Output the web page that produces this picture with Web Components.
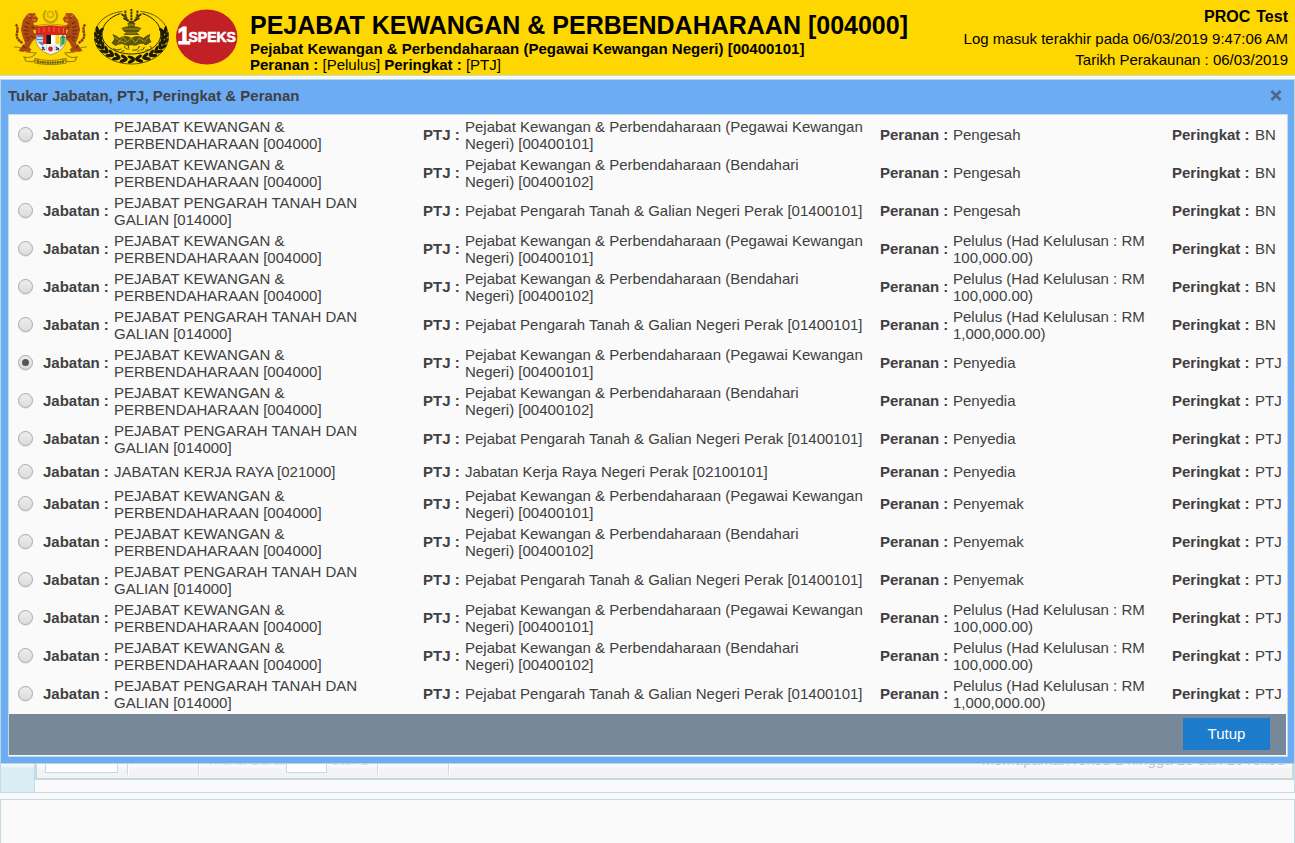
<!DOCTYPE html>
<html lang="ms">
<head>
<meta charset="utf-8">
<title>1SPEKS</title>
<style>
html,body{margin:0;height:843px;overflow:hidden;background:#fafafa;font:15px/17px "Liberation Sans",Arial,sans-serif;color:#404040}
</style>
</head>
<body>
<speks-app></speks-app>
<script>
function define(name, html, setup) {
  const t = document.createElement('template');
  t.innerHTML = html;
  customElements.define(name, class extends HTMLElement {
    constructor() {
      super();
      this.attachShadow({mode: 'open'}).appendChild(t.content.cloneNode(true));
    }
    connectedCallback() { if (setup) setup(this, this.shadowRoot); }
  });
}

const tiger = `
    <path d="M13 6q3-2 5-1l2-.5 1 3 2 2-1 3-4 1 1 3 5 1v3l-6 0 1 4 5 1 1 3-5 1-3 3-3 6 2 2-1 2-5-1 1-8-2-5-2-8 2-9z" fill="#ad4a14" stroke="#ad4a14" stroke-width="1.200"/>
    <path d="M8 34Q1 30 2.500 24T1 15" fill="none" stroke="#8c380d" stroke-width="2.400" stroke-dasharray="2.600 .5"/>
    <path d="M9 35l-5 7 5 1 5-6z" fill="#a94512"/>
    <path d="M11 13l4 2M10 17l4 2M9 21l5 1M10 25l4 0M11 29l4-1M12 32l3-2M15 8l2 2M17 18l3 1M16 27l4 2M8 37l3 2" stroke="#5a1f08" stroke-width=".9"/>
    <path d="M14 6l1 2M19 7h2M18 11h3" stroke="#e5a13a" stroke-width="1"/>`;

/* Federal coat of arms: crescent, two tigers, shield and motto ribbon */
define('crest-malaysia', `
<style>:host{display:block;width:75px;height:56px}svg{display:block}</style>
<svg width="75" height="56" viewBox="0 0 75 56">
  <g fill="none" stroke="#c4a000" stroke-width="2.200">
    <path d="M33 1.500a6.800 6.800 0 1 0 9 0"/><circle cx="37.500" cy="5.500" r="3" stroke-width="1.800" stroke-dasharray="1.200 .5"/>
  </g>
  <path d="M23 17q14-4 30 0" fill="none" stroke="#c79a00" stroke-width="1.200"/>
  <g fill="none" stroke="#9c830c" stroke-width="1.200">
    <path d="M1 38q9 0 12 5l10 1q-4 6-12 4l2 4q8 2 13-2M74 38q-9 0-12 5l-10 1q4 6 12 4l-2 4q-8 2-13-2"/>
    <path d="M22 49.500q15 4 31 0v4.500q-15 3-31 0z"/>
  </g>
  <path d="M24 52.300q13 2.600 27 0" fill="none" stroke="#6b590c" stroke-width="2.200" stroke-dasharray="2 .5"/>
  <g transform="translate(1.500 0)">${tiger}</g>
  <g transform="matrix(-1 0 0 1 73.500 0)">${tiger}</g>
  <path d="M23 18q14-3 30 0v14q-1 9-15 14Q24 41 23 32z" fill="#f3f3ee" stroke="#a0642c" stroke-width=".6"/>
  <path d="M23 18q14-3 30 0v8H23z" fill="#d9261c"/>
  <path d="M26 19v5M31 18.500v5M36 18v5M41 18v5M46 18.500v5M50.500 19v5" stroke="#ef6a22" stroke-width="1"/>
  <path d="M23.300 26h7v11q-6-3-7-7z" fill="#5a88bd"/><path d="M24 29h6M24 32h6" stroke="#e8eef2" stroke-width="1.400"/>
  <path d="M30 26h4.500v9H30z" fill="#e12c24"/><path d="M33.500 26h4.500v9h-4.500z" fill="#171717"/>
  <path d="M38 26h4.500v9H38z" fill="#fff"/><path d="M42.500 26h4v9h-4z" fill="#f8d313"/>
  <path d="M47 28h5.500v5q-1 3-5.500 5z" fill="#79b86b"/><path d="M50 26v9M48 28h4" stroke="#1f8a45" stroke-width="1.300"/>
  <circle cx="37.500" cy="40" r="2.400" fill="#cf2530"/><path d="M29 38l3 3M31 38l-2 3M43 38l3 3M46 39l-3 2" stroke="#2a3f79" stroke-width="1.300"/>
  <path d="M33.500 36v6M42 36v6" stroke="#8c9bbb" stroke-width=".5"/>
</svg>`);

/* Perak state crest: rice wreath around a crown */
define('crest-perak', `
<style>:host{display:block;width:76px;height:56px}svg{display:block}</style>
<svg width="76" height="56" viewBox="0.600 0 76 56">
  <g fill="none" stroke="#242000">
    <path d="M29 2.500C12 4 1 15 1 28c0 15 17 27 37 27s37-12 37-27C75 15 64 4 47 2.500" stroke-width=".7"/>
    <path d="M27 4.500C16 8 8.500 16 8.500 25c0 11 13 20 29.500 20s29.500-9 29.500-20C67.500 16 60 8 49 4.500" stroke-width="1"/>
  </g>
  <g id="leaves" fill="#1f1c04"></g>
  <g stroke="#3c3707" stroke-width="1.900" fill="none">
    <path d="M38 0v15M32 1.500q-1 8 6 13M44 1.500q1 8-6 13" stroke-dasharray="2.400 .6"/>
    <path d="M28 5l4 3M30 9l5 3M48 5l-4 3M46 9l-5 3"/>
  </g>
  <path d="M34 14h8l-1 4h-6zM28 19q10-4 20 0l-3 4H31zM33 23h10l3 3H30z" fill="#5b530a"/>
  <path d="M30 20h16M33 24h10M35 16h6" stroke="#d1b500" stroke-width=".7"/>
  <path d="M19 25q4 1 7 4 6-4 12 0 6-4 12 0 3-3 7-4l-1 4 2 4-5 3q-4-2-7-1-4 3-8 1-5 2-9-1-4 0-7 2l-4-3 3-4z" fill="#5c5409"/>
  <path d="M21 28l5 4 4-4 4 5 4-4 4 5 4-5 5 4 4-5M24 34l3-2 6 2" fill="none" stroke="#c5ab00" stroke-width=".8"/>
  <path d="M20 39.500q3 3 8 .5m3-3q1 4 5 3m-1-4v3m4 2q6 1 7-4m1 4q3 1 4-3m1 3h5q2-2 0-4M28 42.500l3-1m13 1l2-1m5-6h2" fill="none" stroke="#4a4306" stroke-width="1"/>
</svg>`, (host, root) => {
  const g = root.getElementById('leaves');
  let d = '';
  for (let i = 0; i < 34; i++) {
    const t = -14 + Math.floor(i / 2) * 13;
    const a = t * Math.PI / 180;
    const dir = t < 90 ? -1 : 1, side = i % 2 ? 1 : -1;
    const x = 38 + (33.3 + side * 1.700) * Math.cos(a), y = 27.200 + (23.3 + side * 1.700) * Math.sin(a);
    const rot = Math.atan2(23.8 * Math.cos(a), -33.3 * Math.sin(a)) * 180 / Math.PI - dir * side * 26;
    d += `<ellipse cx="${x.toFixed(1)}" cy="${y.toFixed(1)}" rx="4" ry="1.600" transform="rotate(${rot.toFixed(0)} ${x.toFixed(1)} ${y.toFixed(1)})"/>`;
  }
  g.innerHTML = d;
});

define('speks-logo', `
<style>:host{display:block;width:62px;height:56px}svg{display:block}text{font-family:"Liberation Sans",Arial,sans-serif;font-weight:700;fill:#fff;stroke:#fff}</style>
<svg width="62" height="56" viewBox="0 0 62 56">
  <ellipse cx="30.700" cy="28" rx="30.700" ry="27.500" fill="#c12026"/>
  <text y="34.500"><tspan x="1.500" font-size="23" stroke-width="1">1</tspan><tspan x="12.500" y="33" font-size="14" stroke-width=".6">SPEKS</tspan></text>
</svg>`);

define('app-header', `
<style>
:host{display:flex;height:75px;background:#ffd700;color:#000;border-bottom:1px solid #c5dbe2}
.logos{display:flex;gap:6px;padding:9px 0 0 13px;width:237px;box-sizing:border-box}
.org{flex:1;padding-top:10px;padding-left:13px;white-space:nowrap}
h1{font-size:25px;line-height:31px;margin:0;font-weight:bold}
.org div{line-height:16px;font-size:15px}
.user{padding:6px 7px 0 0;text-align:right;line-height:21.700px;font-size:15px;white-space:nowrap}
.user b{font-size:16px;word-spacing:1.500px}
</style>
<div class="logos"><crest-malaysia></crest-malaysia><crest-perak></crest-perak><speks-logo></speks-logo></div>
<div class="org"><h1>PEJABAT KEWANGAN &amp; PERBENDAHARAAN [004000]</h1>
<div><b>Pejabat Kewangan &amp; Perbendaharaan (Pegawai Kewangan Negeri) [00400101]</b></div>
<div><b>Peranan :</b> [Pelulus] <b>Peringkat :</b> [PTJ]</div></div>
<div class="user"><b>PROC Test</b><br>Log masuk terakhir pada 06/03/2019 9:47:06 AM<br>Tarikh Perakaunan : 06/03/2019</div>`);

define('radio-dot', `
<style>
:host{display:flex;align-items:center;justify-content:center;box-sizing:border-box;width:15px;height:15px;border:1px solid #a9a9a9;border-radius:50%;background:linear-gradient(#ededed,#dcdcdc);box-shadow:0 1px 0 #e8e8e8}
i{display:none;width:7px;height:7px;border-radius:50%;background:#555}
:host([checked]) i{display:block}
</style><i></i>`);

define('role-row', `
<style>
:host{display:grid;grid-template-columns:25px 71px 309px 42px 415px 73px 219px 83px 1fr;align-items:center;height:27px;padding-left:9px;box-sizing:border-box}
:host([tall]){height:38px;padding-bottom:1px}
span,b{white-space:pre}
span.two{margin-bottom:-1px}
</style>
<radio-dot></radio-dot><b>Jabatan :</b><span id="j"></span><b>PTJ :</b><span id="p"></span><b>Peranan :</b><span id="r"></span><b>Peringkat :</b><span id="k"></span>`,
(host, root) => {
  for (const k of ['j', 'p', 'r', 'k']) {
    const s = root.getElementById(k);
    s.textContent = host.data[k];
    s.classList.toggle('two', host.data[k].includes('\n'));
  }
  if (host.data.on) root.querySelector('radio-dot').setAttribute('checked', '');
  if (host.data.j.includes('\n')) host.setAttribute('tall', '');
});

define('role-dialog', `
<style>
:host{display:flex;flex-direction:column;box-sizing:border-box;height:685px;margin-top:3px;background:#6bacf5;border:1px solid #b9d6e4;padding:0 6px 6px 7px}
header{display:flex;height:34px;align-items:center;justify-content:space-between;padding:0 6px 3px 0;box-sizing:border-box}
.box{flex:1;border:1px solid #c5dbe2;background:#fafafa;display:flex;flex-direction:column}
.rows{padding-top:1px;height:598px}
footer{display:flex;justify-content:flex-end;align-items:flex-start;height:41px;background:#778899;box-sizing:border-box;padding:4px 16px 0 0;margin:0 1px 1px 0}
button{all:unset;box-sizing:border-box;width:87px;height:32px;line-height:32px;text-align:center;background:#1c7bcb;color:#fff;font-size:15px}
svg{display:block}
</style>
<header><b>Tukar Jabatan, PTJ, Peringkat &amp; Peranan</b><svg width="12" height="11" viewBox="0 0 12 11"><path d="M1.500 1l9 9M10.500 1l-9 9" stroke="#4c6a8c" stroke-width="2.800"/></svg></header>
<div class="box"><div class="rows"></div><footer><button>Tutup</button></footer></div>`,
(host, root) => {
  const J = ['PEJABAT KEWANGAN &\nPERBENDAHARAAN [004000]', 'PEJABAT KEWANGAN &\nPERBENDAHARAAN [004000]', 'PEJABAT PENGARAH TANAH DAN\nGALIAN [014000]', 'JABATAN KERJA RAYA [021000]'];
  const P = ['Pejabat Kewangan & Perbendaharaan (Pegawai Kewangan\nNegeri) [00400101]', 'Pejabat Kewangan & Perbendaharaan (Bendahari\nNegeri) [00400102]', 'Pejabat Pengarah Tanah & Galian Negeri Perak [01400101]', 'Jabatan Kerja Raya Negeri Perak [02100101]'];
  const L = 'Pelulus (Had Kelulusan : RM\n100,000.00)', M = 'Pelulus (Had Kelulusan : RM\n1,000,000.00)';
  const list = [
    [0, 'Pengesah', 'BN'], [1, 'Pengesah', 'BN'], [2, 'Pengesah', 'BN'],
    [0, L, 'BN'], [1, L, 'BN'], [2, M, 'BN'],
    [0, 'Penyedia', 'PTJ', true], [1, 'Penyedia', 'PTJ'], [2, 'Penyedia', 'PTJ'], [3, 'Penyedia', 'PTJ'],
    [0, 'Penyemak', 'PTJ'], [1, 'Penyemak', 'PTJ'], [2, 'Penyemak', 'PTJ'],
    [0, L, 'PTJ'], [1, L, 'PTJ'], [2, M, 'PTJ']];
  const rows = root.querySelector('.rows');
  for (const [i, r, k, on] of list) {
    const e = document.createElement('role-row');
    e.data = {j: J[i], p: P[i], r, k, on};
    rows.appendChild(e);
  }
});

/* Visible remainder of the table pager under the dialog */
define('table-pager', `
<style>
:host{display:flex;height:29px;box-sizing:border-box;border:1px solid #c5dbe2;border-top:0}
.side{width:33px;background:linear-gradient(#fafafa,#d9edf5 5px);border-right:1px solid #c5dbe2}
.main{flex:1}
.bar{display:flex;height:16px;box-sizing:border-box;overflow:hidden;border:solid #c5dbe2;border-width:0 2px 2px;background:linear-gradient(#fcfcfc,#f3f3f3 6px);color:#dedede;padding-left:8px}
.in{box-sizing:border-box;height:9px;border:1px solid #c5dbe2;border-top:0;background:#fff}
.txt{margin-top:-13px;height:17px;white-space:nowrap}
.sep{width:1px;height:11px;background:#d8d8d8;border-right:1px solid #fff}
</style>
<div class="side"></div><div class="main"><div class="bar">
<div class="in" style="width:73px"></div><div class="sep" style="margin-left:9px"></div><div class="sep" style="margin-left:69px"></div>
<div class="txt" style="width:77px;margin-left:9px">Muka Surat</div><div class="in" style="width:41px"></div><div class="txt" style="width:46px;margin-left:4px">dari 1</div>
<div class="sep"></div><div class="sep" style="margin-left:69px"></div>
<div class="txt" style="margin-left:auto;padding-right:7px;color:#c4c4c4">Memaparkan rekod 1 hingga 10 dari 10 rekod</div>
</div></div>`);

define('speks-app', `
<style>
:host{display:flex;flex-direction:column;width:1295px;height:843px;overflow:hidden}
.next{flex:1;margin-top:6px;border:1px solid #c5dbe2;border-bottom:0}
</style>
<app-header></app-header><role-dialog></role-dialog><table-pager></table-pager><div class="next"></div>`);
</script>
</body>
</html>
